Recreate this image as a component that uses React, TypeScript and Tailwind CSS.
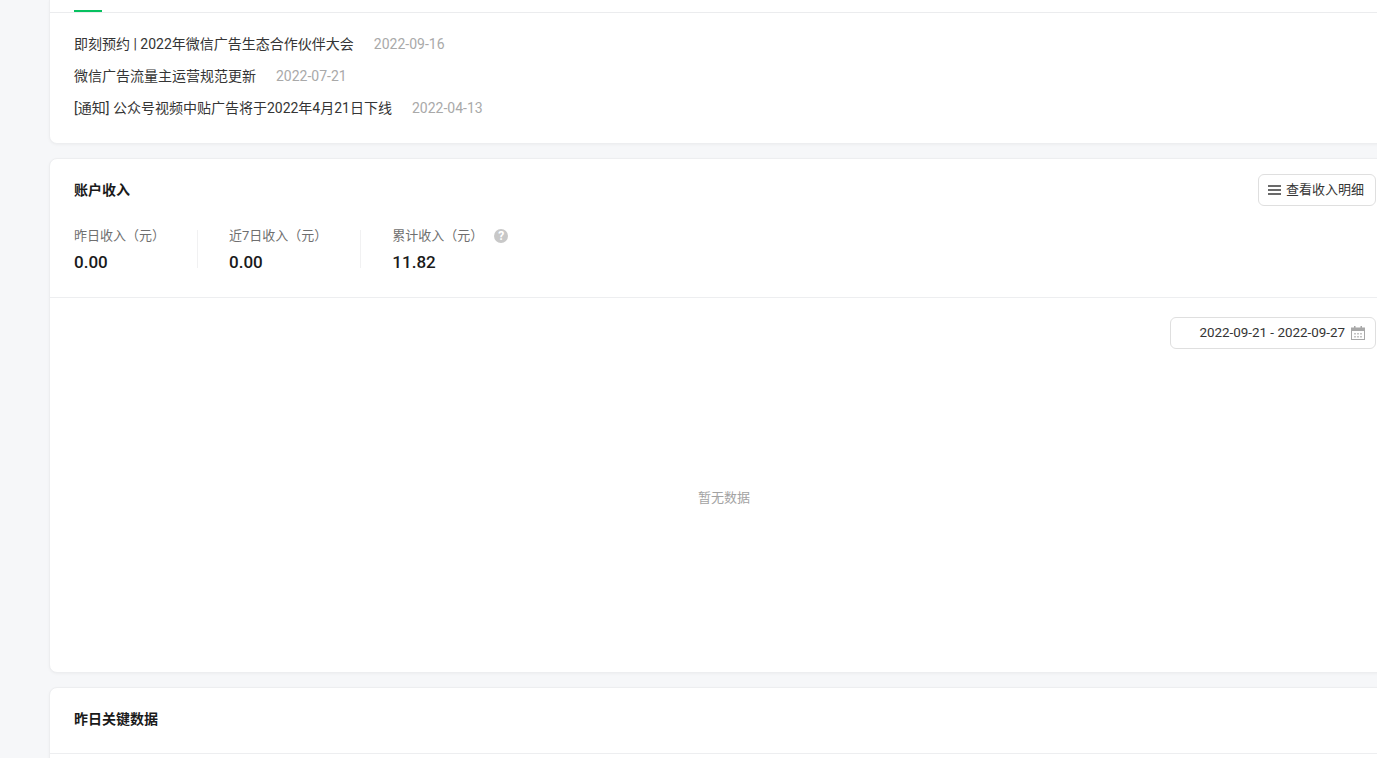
const font = "font-['Roboto','Noto_Sans_CJK_SC',sans-serif]";

const notices = [
  { title: '即刻预约 | 2022年微信广告生态合作伙伴大会', date: '2022-09-16' },
  { title: '微信广告流量主运营规范更新', date: '2022-07-21' },
  { title: '[通知] 公众号视频中贴广告将于2022年4月21日下线', date: '2022-04-13' },
];

const stats = [
  { label: '昨日收入（元）', value: '0.00', pad: 'pr-[32px]' },
  { label: '近7日收入（元）', value: '0.00', pad: 'pl-[31px] pr-[33px]' },
  { label: '累计收入（元）', value: '11.82', pad: 'pl-[31px]', help: true },
];

const Card = ({ className, children }: { className: string; children: React.ReactNode }) => (
  <section className={`bg-white border border-[#edeef0] shadow-[0_1px_3px_rgba(0,0,0,0.04)] rounded-lg ${className}`}>
    {children}
  </section>
);

const App = () => {
  return (
    <div className={`${font} h-[758px] w-[1377px] overflow-hidden bg-[#f6f7f9] pl-[49px] text-[#353535]`}>
      <div className="w-[1352px]">
        {/* Notices, scrolled so that only the tab line is left at the top */}
        <Card className="h-[144px] rounded-t-none border-t-0">
          <div className="h-[13px] border-b border-[#ebecee] pl-[24px]">
            <div className="h-[12px] w-[28px] border-b-2 border-[#07c160]" />
          </div>
          <ul className="flex flex-col gap-[8px] pl-[24px] pt-[19px]">
            {notices.map((n) => (
              <li key={n.date} className="flex h-[24px] items-center gap-[20px] text-[14px] leading-[24px]">
                <span>{n.title}</span>
                <span className="text-[#a9a9a9]">{n.date}</span>
              </li>
            ))}
          </ul>
        </Card>

        {/* Income */}
        <Card className="mt-[14px] h-[515px]">
          <div className="h-[139px] border-b border-[#edeef0] px-[24px]">
            <div className="flex h-[62px] items-center justify-between">
              <h2 className="text-[14px] font-bold text-[#1a1a1a]">账户收入</h2>
              <button
                type="button"
                className="flex h-[32px] w-[118px] items-center gap-[5px] rounded-md border border-[#dfdfdf] bg-white pl-[9px] text-[13px] text-[#353535]"
              >
                <svg width="13" height="12" viewBox="0 0 13 12" className="fill-[#6a6a6a]">
                  <rect x="0" y="1" width="13" height="2" />
                  <rect x="0" y="5" width="13" height="2" />
                  <rect x="0" y="9" width="13" height="2" />
                </svg>
                查看收入明细
              </button>
            </div>
            <div className="mt-[9px] flex">
              {stats.map((s, i) => (
                <div key={s.label} className={`h-[38px] ${s.pad} ${i < 2 ? 'border-r border-[#f1f1f2]' : ''}`}>
                  <div className="flex h-[11px] items-center text-[13px] text-[#6f6f6f]">
                    {s.label}
                    {s.help && (
                      <span className="ml-[11px] flex h-[14px] w-[14px] items-center justify-center rounded-full bg-[#c8c8c8] text-[12px] font-bold text-white">
                        ?
                      </span>
                    )}
                  </div>
                  <div className="mt-[9px] text-[17px] leading-[24px] font-medium text-[#1a1a1a]">{s.value}</div>
                </div>
              ))}
            </div>
          </div>

          <div className="flex justify-end px-[24px] pt-[19px]">
            <div className="flex h-[32px] w-[206px] items-center justify-end gap-[6px] rounded-md border border-[#dfdfdf] pr-[10px] text-[13.4px] text-[#353535]">
              2022-09-21 - 2022-09-27
              <svg width="14" height="14" viewBox="0 0 14 14">
                <rect x="0.5" y="2" width="13" height="11.5" fill="none" stroke="#a8a8a8" />
                <rect x="0" y="2" width="14" height="3" fill="#a8a8a8" />
                <rect x="3" y="0" width="1.5" height="3" fill="#a8a8a8" />
                <rect x="9.5" y="0" width="1.5" height="3" fill="#a8a8a8" />
                <path d="M3 7h2v1.5H3zM6 7h2v1.5H6zM9 7h2v1.5H9zM3 10h2v1.5H3zM6 10h2v1.5H6zM9 10h2v1.5H9z" fill="#c4c4c4" />
              </svg>
            </div>
          </div>

          <p className="mt-[139px] pl-[648px] text-[13px] text-[#a3a3a3]">暂无数据</p>
        </Card>

        {/* Key data */}
        <Card className="mt-[14px] h-[100px] rounded-b-none">
          <div className="flex h-[66px] items-center border-b border-[#edeef0] pb-[3px] pl-[24px]">
            <h2 className="text-[14px] font-bold text-[#1a1a1a]">昨日关键数据</h2>
          </div>
        </Card>
      </div>
    </div>
  );
};

export default App;
